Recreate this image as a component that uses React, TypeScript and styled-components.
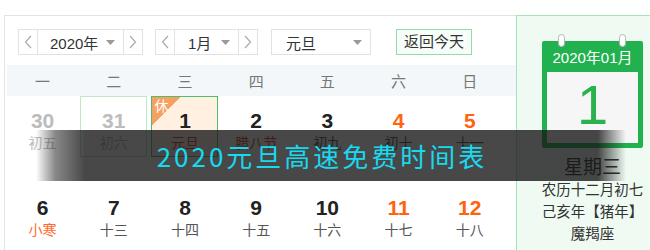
import React from 'react'
import styled, { createGlobalStyle } from 'styled-components'

const GlobalStyle = createGlobalStyle`
  body {
    margin: 0;
    background: #fff;
    overflow: hidden;
    font-family: "Liberation Sans", "Noto Sans CJK SC", sans-serif;
    color: #333;
  }
`

const Page = styled.div`
  position: relative;
  display: flex;
  width: 650px;
  height: 250px;
  padding-top: 15px;
  box-sizing: border-box;
  overflow: hidden;
`

const CalendarPanel = styled.div`
  width: 512px;
  margin-left: 4px;
  padding-left: 2px;
  box-sizing: border-box;
  border-left: 1px solid #e3e3e3;
  border-top: 1px solid #e3e3e3;
`

const Toolbar = styled.div`
  display: flex;
  align-items: center;
  height: 26px;
  margin-top: 13px;
  padding-left: 11px;
`

const SelectGroup = styled.div<{ $gap?: number }>`
  display: flex;
  height: 26px;
  margin-right: ${(p) => p.$gap ?? 12}px;
`

const ArrowButton = styled.div`
  width: 20px;
  box-sizing: border-box;
  border: 1px solid #e2e2e2;
  display: flex;
  align-items: center;
  justify-content: center;
`

const SelectBox = styled.div<{ $width: number; $pad: number }>`
  width: ${(p) => p.$width}px;
  box-sizing: border-box;
  border-top: 1px solid #e2e2e2;
  border-bottom: 1px solid #e2e2e2;
  display: flex;
  align-items: center;
  justify-content: space-between;
  padding: 0 8px 0 ${(p) => p.$pad}px;
  font-size: 15px;
  color: #333;
`

const PlainSelect = styled(SelectBox)`
  border: 1px solid #e2e2e2;
`

const TodayButton = styled.div`
  height: 26px;
  box-sizing: border-box;
  padding: 0 7px;
  border: 1px solid #93dca6;
  background: #f7fdf8;
  font-size: 15px;
  line-height: 24px;
  color: #333;
`

const WeekHeader = styled.div`
  display: grid;
  grid-template-columns: repeat(7, 71.2px);
  height: 31px;
  margin: 10px 0 0 0;
  background: #f3f7f9;
  align-items: center;
`

const WeekDay = styled.div`
  text-align: center;
  font-size: 15px;
  color: #777;
`

const DayGrid = styled.div`
  display: grid;
  grid-template-columns: repeat(7, 71.2px);
  row-gap: 26px;
`

const DayCell = styled.div<{ $variant?: 'holiday' | 'outline' }>`
  position: relative;
  justify-self: center;
  width: 67px;
  height: 61px;
  box-sizing: border-box;
  display: flex;
  flex-direction: column;
  align-items: center;
  border: 1px solid
    ${(p) => (p.$variant === 'holiday' ? '#4cbf6c' : p.$variant === 'outline' ? '#bde9c8' : 'transparent')};
  background: ${(p) => (p.$variant === 'holiday' ? '#fff0e2' : 'transparent')};
`

const DayNumber = styled.div<{ $tone: string }>`
  margin-top: 11px;
  font-size: 21px;
  line-height: 25px;
  font-weight: bold;
  color: ${(p) => p.$tone};
`

const LunarText = styled.div<{ $tone: string }>`
  margin-top: 1px;
  font-size: 14px;
  line-height: 18px;
  color: ${(p) => p.$tone};
`

const RestBadge = styled.div`
  position: absolute;
  top: 0;
  left: 0;
  width: 30px;
  height: 28px;
  background: linear-gradient(135deg, #f6a062 50%, transparent 50%);
  color: #fff;
  font-size: 14px;
  line-height: 17px;
  padding-left: 2px;
  box-sizing: border-box;
  font-family: "Noto Sans CJK SC", sans-serif;
`

const SidePanel = styled.div`
  flex: 1;
  display: flex;
  flex-direction: column;
  align-items: center;
  padding-left: 18px;
  background: #effaf2;
  border-left: 1px solid #a6e4b8;
  border-top: 1px solid #a6e4b8;
`

const TearCalendar = styled.div`
  position: relative;
  width: 101px;
  margin-top: 25px;
`

const Ring = styled.div<{ $left: number }>`
  position: absolute;
  top: -7px;
  left: ${(p) => p.$left}px;
  width: 7px;
  height: 13px;
  border-radius: 4px;
  background: #fff;
  border: 1px solid #b5b5b5;
  box-sizing: border-box;
`

const TearHead = styled.div`
  height: 31px;
  background: #22b14f;
  border-radius: 2px 2px 0 0;
  color: #fff;
  font-size: 15px;
  line-height: 33px;
  text-align: center;
`

const TearBody = styled.div`
  height: 76px;
  box-sizing: border-box;
  border: 5px solid #22b14f;
  border-top: none;
  border-radius: 0 0 3px 3px;
  background: #f6f6f6;
  color: #2bb24f;
  font-family: "Liberation Sans", sans-serif;
  font-size: 56px;
  line-height: 66px;
  text-align: center;
`

const WeekName = styled.div`
  margin-top: 9px;
  font-size: 19px;
  line-height: 22px;
  color: #333;
`

const InfoLine = styled.div`
  font-size: 14.5px;
  line-height: 22px;
  color: #333;
  white-space: nowrap;
`

const TitleBanner = styled.div`
  position: absolute;
  top: 130px;
  left: 0;
  width: 650px;
  height: 51px;
  padding-right: 6px;
  box-sizing: border-box;
  display: flex;
  align-items: center;
  justify-content: center;
  background: linear-gradient(
    to right,
    rgba(20, 20, 20, 0) 36px,
    rgba(20, 20, 20, 0.5) 55px,
    rgba(20, 20, 20, 0.78) 85px,
    rgba(20, 20, 20, 0.78) 598px,
    rgba(20, 20, 20, 0) 626px
  );
  color: #17d9ef;
  font-family: "Noto Sans CJK SC", sans-serif;
  font-size: 26px;
  letter-spacing: 3px;
`

const Chevron = ({ dir }: { dir: 'left' | 'right' }) => (
  <svg width="8" height="14" viewBox="0 0 8 14">
    <path
      d={dir === 'left' ? 'M7 1 L1.5 7 L7 13' : 'M1 1 L6.5 7 L1 13'}
      fill="none"
      stroke="#aaa"
      strokeWidth="1.2"
    />
  </svg>
)

const Caret = () => (
  <svg width="9" height="5" viewBox="0 0 9 5">
    <path d="M0 0 H9 L4.5 5 Z" fill="#999" />
  </svg>
)

const weekDays = ['一', '二', '三', '四', '五', '六', '日']

interface IDay {
  num: string
  lunar: string
  numTone: string
  lunarTone: string
  variant?: 'holiday' | 'outline'
  rest?: boolean
}

const dark = '#222'
const grey = '#555'
const weekend = '#ff6310'

const days: IDay[] = [
  { num: '30', lunar: '初五', numTone: '#bcbcbc', lunarTone: '#bcbcbc' },
  { num: '31', lunar: '初六', numTone: '#bcbcbc', lunarTone: '#bcbcbc', variant: 'outline' },
  { num: '1', lunar: '元旦', numTone: dark, lunarTone: '#d2451c', variant: 'holiday', rest: true },
  { num: '2', lunar: '腊八节', numTone: dark, lunarTone: '#d2451c' },
  { num: '3', lunar: '初九', numTone: dark, lunarTone: grey },
  { num: '4', lunar: '初十', numTone: weekend, lunarTone: grey },
  { num: '5', lunar: '十一', numTone: weekend, lunarTone: grey },
  { num: '6', lunar: '小寒', numTone: dark, lunarTone: '#ff6a2a' },
  { num: '7', lunar: '十三', numTone: dark, lunarTone: grey },
  { num: '8', lunar: '十四', numTone: dark, lunarTone: grey },
  { num: '9', lunar: '十五', numTone: dark, lunarTone: grey },
  { num: '10', lunar: '十六', numTone: dark, lunarTone: grey },
  { num: '11', lunar: '十七', numTone: weekend, lunarTone: grey },
  { num: '12', lunar: '十八', numTone: weekend, lunarTone: grey },
]

const App: React.FunctionComponent = () => {
  return (
    <Page>
      <GlobalStyle />
      <CalendarPanel>
        <Toolbar>
          <SelectGroup>
            <ArrowButton>
              <Chevron dir="left" />
            </ArrowButton>
            <SelectBox $width={85} $pad={12}>
              2020年
              <Caret />
            </SelectBox>
            <ArrowButton>
              <Chevron dir="right" />
            </ArrowButton>
          </SelectGroup>
          <SelectGroup $gap={13}>
            <ArrowButton>
              <Chevron dir="left" />
            </ArrowButton>
            <SelectBox $width={63} $pad={13}>
              1月
              <Caret />
            </SelectBox>
            <ArrowButton>
              <Chevron dir="right" />
            </ArrowButton>
          </SelectGroup>
          <SelectGroup $gap={25}>
            <PlainSelect $width={100} $pad={14}>
              元旦
              <Caret />
            </PlainSelect>
          </SelectGroup>
          <TodayButton>返回今天</TodayButton>
        </Toolbar>

        <WeekHeader>
          {weekDays.map((d) => (
            <WeekDay key={d}>{d}</WeekDay>
          ))}
        </WeekHeader>

        <DayGrid>
          {days.map((day) => (
            <DayCell key={day.num} $variant={day.variant}>
              {day.rest && <RestBadge>休</RestBadge>}
              <DayNumber $tone={day.numTone}>{day.num}</DayNumber>
              <LunarText $tone={day.lunarTone}>{day.lunar}</LunarText>
            </DayCell>
          ))}
        </DayGrid>
      </CalendarPanel>

      <SidePanel>
        <TearCalendar>
          <Ring $left={16} />
          <Ring $left={77} />
          <TearHead>2020年01月</TearHead>
          <TearBody>1</TearBody>
        </TearCalendar>
        <WeekName>星期三</WeekName>
        <InfoLine>农历十二月初七</InfoLine>
        <InfoLine>己亥年【猪年】</InfoLine>
        <InfoLine>魔羯座</InfoLine>
      </SidePanel>

      <TitleBanner>2020元旦高速免费时间表</TitleBanner>
    </Page>
  )
}

export default App
